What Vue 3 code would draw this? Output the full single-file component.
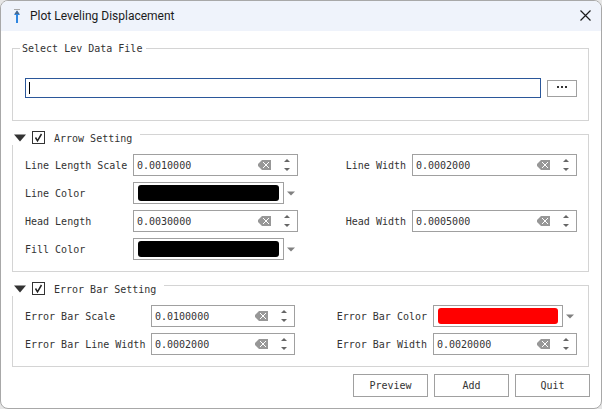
<script setup>
import { ref, reactive } from 'vue'

const filePath = ref('')

const groups = reactive([
  {
    key: 'arrow',
    title: 'Arrow Setting',
    enabled: true,
    open: true,
    fields: [
      { id: 'line-length', label: 'Line Length Scale', value: '0.0010000', side: 'left' },
      { id: 'line-width', label: 'Line Width', value: '0.0002000', side: 'right' },
      { id: 'line-color', label: 'Line Color', color: '#000000', side: 'left' },
      { id: 'head-length', label: 'Head Length', value: '0.0030000', side: 'left' },
      { id: 'head-width', label: 'Head Width', value: '0.0005000', side: 'right' },
      { id: 'fill-color', label: 'Fill Color', color: '#000000', side: 'left' }
    ]
  },
  {
    key: 'error',
    title: 'Error Bar Setting',
    enabled: true,
    open: true,
    fields: [
      { id: 'bar-scale', label: 'Error Bar Scale', value: '0.0100000', side: 'left' },
      { id: 'bar-color', label: 'Error Bar Color', color: '#ff0000', side: 'right' },
      { id: 'bar-line-width', label: 'Error Bar Line Width', value: '0.0002000', side: 'left' },
      { id: 'bar-width', label: 'Error Bar Width', value: '0.0020000', side: 'right' }
    ]
  }
])

function step(field, amount) {
  field.value = Math.max(0, Number(field.value) + amount).toFixed(7)
}
</script>

<template>
  <main class="dialog">
    <header class="titlebar">
      <svg class="app-icon" width="8" height="15" viewBox="0 0 8 15" aria-hidden="true">
        <path d="M1 .5h6" stroke="#a9a9a9" />
        <path d="M4 1.5L7 6H5v8H3V6H1z" fill="#2f86e0" />
        <path d="M4 1.5L6.5 5h-5z" fill="#4c6a8c" />
      </svg>
      <h1>Plot Leveling Displacement</h1>
      <button class="close" type="button" aria-label="Close">
        <svg width="11" height="11" viewBox="0 0 11 11"><path d="M.5 .5l10 10M10.5 .5l-10 10" stroke="#1b1b1b" stroke-width="1.2" /></svg>
      </button>
    </header>

    <form class="body" @submit.prevent>
      <fieldset class="group file">
        <legend><label for="lev-file">Select Lev Data File</label></legend>
        <div class="file-row">
          <input id="lev-file" v-model="filePath" class="path" :class="{ blank: !filePath }" type="text" />
          <button class="browse" type="button" aria-label="Browse">
            <svg width="10" height="2" viewBox="0 0 10 2"><path d="M0 0h2v2H0zM4 0h2v2H4zM8 0h2v2H8z" fill="#333" /></svg>
          </button>
        </div>
      </fieldset>

      <fieldset v-for="g in groups" :key="g.key" class="group setting" :class="g.key">
        <legend>
          <button class="fold" type="button" :aria-label="g.title" :aria-expanded="g.open" @click="g.open = !g.open">
            <svg width="12" height="8" viewBox="0 0 12 8"><path d="M0 .5h12L6 7.5z" fill="#333" /></svg>
          </button>
          <span class="check">
            <input :id="g.key" v-model="g.enabled" type="checkbox" />
            <svg v-if="g.enabled" width="13" height="13" viewBox="0 0 13 13">
              <path d="M3.5 6.5L5.5 9.8L9.5 3" fill="none" stroke="#222" stroke-width="1.5" />
            </svg>
          </span>
          <label :for="g.key">{{ g.title }}</label>
        </legend>
        <div v-if="g.open" class="grid">
          <template v-for="f in g.fields" :key="f.id">
            <label :for="f.id" :class="['caption', f.side]">{{ f.label }}</label>
            <div v-if="f.color" class="color">
              <button :id="f.id" class="swatch" type="button"><span :style="{ background: f.color }"></span></button>
              <button class="drop" type="button" :aria-label="f.label">
                <svg width="8" height="5" viewBox="0 0 8 5"><path d="M0 .5h8L4 4.5z" fill="#808080" /></svg>
              </button>
            </div>
            <div v-else class="spin">
              <input :id="f.id" v-model="f.value" type="text" />
              <button class="clear" type="button" aria-label="Clear" @click="f.value = ''">
                <svg width="13" height="10" viewBox="0 0 13 10">
                  <path d="M4 0h9v10H4L0 6V4z" fill="#979797" />
                  <path d="M5 2l6 6M11 2L5 8" stroke="#fff" />
                </svg>
              </button>
              <span class="steps">
                <button type="button" aria-label="Increase" @click="step(f, 0.0001)">
                  <svg width="6" height="3" viewBox="0 0 6 3"><path d="M0 3h6L3 0z" fill="#666" /></svg>
                </button>
                <button type="button" aria-label="Decrease" @click="step(f, -0.0001)">
                  <svg width="6" height="3" viewBox="0 0 6 3"><path d="M0 0h6L3 3z" fill="#666" /></svg>
                </button>
              </span>
            </div>
          </template>
        </div>
      </fieldset>

      <footer class="actions">
        <button type="button">Preview</button>
        <button type="button">Add</button>
        <button type="button">Quit</button>
      </footer>
    </form>
  </main>
</template>

<style>
body {
  background: #e6e6e6;
}
</style>

<style scoped>
.dialog,
.dialog * {
  box-sizing: border-box;
}
.dialog {
  border: 1px solid #a8a8a8;
  border-radius: 8px;
  background: #fff;
  overflow: hidden;
  color: #333;
  font: 10px/12px "DejaVu Sans Mono", "Liberation Mono", monospace;
}
button,
input {
  margin: 0;
  padding: 0;
  border: 0;
  background: none;
  font: inherit;
  color: inherit;
  outline: none;
}
svg {
  display: block;
}
.titlebar {
  display: flex;
  align-items: center;
  height: 30px;
  padding: 0 10px 0 12px;
  background: #eff3fb;
}
.close {
  padding-bottom: 2px;
}
h1 {
  flex: 1;
  margin: 0 0 0 9px;
  font: 12px/16px Roboto, "Open Sans", sans-serif;
  color: #1b1b1b;
}
.body {
  padding: 11px;
}
.group {
  min-width: 0;
  margin: 0 1px 3px 0;
  padding: 0 11px 11px 12px;
  border: 1px solid #d4d4d4;
}
.file {
  padding-bottom: 22px;
}
.file legend {
  height: 13px;
  margin-left: -5px;
  padding: 1px 4px 0 2px;
}
.file-row {
  display: flex;
  align-items: center;
  gap: 6px;
  padding-top: 23px;
}
.path {
  flex: 1;
  min-width: 0;
  height: 20px;
  padding: 0 3px;
  border: 1px solid #2b579a;
}
.path.blank:not(:focus) {
  background: linear-gradient(#000, #000) 3px center / 1px 12px no-repeat;
}
.browse {
  display: grid;
  place-items: center;
  width: 30px;
  height: 17px;
  padding-bottom: 2px;
  border: 1px solid #a0a0a0;
}
.setting legend {
  display: flex;
  align-items: center;
  height: 21px;
  margin-left: -13px;
  padding: 6px 8px 0 2px;
}
.setting legend label {
  padding-top: 2px;
}
.fold {
  margin-right: 6px;
}
.check {
  display: grid;
  width: 13px;
  height: 13px;
  margin-right: 9px;
}
.check > * {
  grid-area: 1 / 1;
}
.check svg {
  pointer-events: none;
}
.check input {
  appearance: none;
  width: 13px;
  height: 13px;
  border: 1px solid #333;
}
.grid {
  display: grid;
  grid-template-columns: 108px 1fr 114px 1fr;
  gap: 6px 0;
  padding-top: 9px;
}
.error .grid {
  grid-template-columns: 126px 1fr 138px 1fr;
}
.caption {
  align-self: center;
  grid-column: 1;
  padding-top: 2px;
  white-space: nowrap;
}
.caption.right {
  grid-column: 3;
  justify-self: end;
  padding-right: 6px;
}
.spin {
  display: flex;
  align-items: center;
  height: 22px;
  padding: 0 7px 0 3px;
  border: 1px solid #a0a0a0;
}
.spin input {
  flex: 1;
  width: 0;
  padding-top: 2px;
}
.steps {
  display: grid;
  gap: 6px;
  margin-left: 13px;
}
.color {
  display: flex;
  align-items: center;
}
.swatch {
  flex: 1;
  height: 22px;
  padding: 2px 4px;
  border: 1px solid #a0a0a0;
}
.swatch span {
  display: block;
  height: 16px;
  border-radius: 3px;
}
.drop {
  padding: 0 3px;
}
.actions {
  display: flex;
  justify-content: flex-end;
  gap: 6px;
  padding-top: 4px;
}
.actions button {
  width: 75px;
  height: 23px;
  padding-top: 1px;
  border: 1px solid #a0a0a0;
}
</style>
